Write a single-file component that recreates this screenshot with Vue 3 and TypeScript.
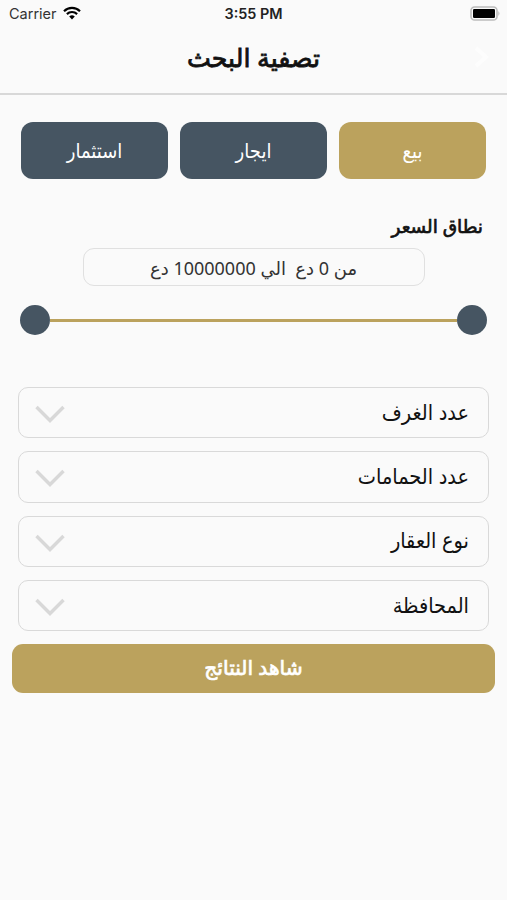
<script setup lang="ts">
const tabs: { label: string; active: boolean }[] = [
  { label: 'بيع', active: true },
  { label: 'ايجار', active: false },
  { label: 'استثمار', active: false },
]
const fields: string[] = ['عدد الغرف', 'عدد الحمامات', 'نوع العقار', 'المحافظة']
</script>

<template>
  <div class="screen" dir="rtl">
    <div class="status" dir="ltr">
      <div class="carrier">
        <span>Carrier</span>
        <svg width="18" height="14" viewBox="0 0 18 14">
          <path d="M1 5.2a11.5 11.5 0 0 1 16 0M3.9 8.1a7.3 7.3 0 0 1 10.2 0" fill="none" stroke="#000" stroke-width="2.2" />
          <path d="M9 13.4 6.2 10.5a4 4 0 0 1 5.6 0z" />
        </svg>
      </div>
      <div class="time">3:55 PM</div>
      <div class="power">
        <svg width="31" height="15" viewBox="0 0 31 15">
          <rect x="1" y="1" width="26" height="13" rx="3.6" fill="none" stroke="#bcbcbc" stroke-width="1.6" />
          <rect x="3" y="3" width="22" height="9" rx="1.2" />
          <path d="M28.3 5q2.4 2.5 0 5z" fill="#bcbcbc" />
        </svg>
      </div>
    </div>
    <header>
      <svg class="back" width="24" height="24" viewBox="0 0 24 24"><path d="m5 3 10 9-10 9" fill="none" stroke="#fdfdfd" stroke-width="4" /></svg>
      <h1>تصفية البحث</h1>
    </header>
    <main>
      <div class="tabs">
        <button v-for="t in tabs" :key="t.label" :class="{ active: t.active }">{{ t.label }}</button>
      </div>
      <h2>نطاق السعر</h2>
      <div class="range">من 0 دع&nbsp; الي 10000000 دع</div>
      <div class="slider"><i class="knob"></i><i class="track"></i><i class="knob"></i></div>
      <div class="fields">
        <div v-for="f in fields" :key="f" class="field">
          <span>{{ f }}</span>
          <svg width="30" height="20" viewBox="0 0 30 20"><path d="M1.5 3 15 16.5 28.5 3" fill="none" stroke="#d8d8d8" stroke-width="3.4" /></svg>
        </div>
      </div>
      <button class="submit">شاهد النتائج</button>
    </main>
  </div>
</template>

<style>
body { background: #fafafa; }
</style>
<style scoped>
* { box-sizing: border-box; }
.screen { height: 900px; background: #fafafa; color: #111; font-family: "Noto Sans", "DejaVu Sans Condensed", "DejaVu Sans", sans-serif; }
.status { height: 27px; display: grid; grid-template-columns: 1fr auto 1fr; align-items: center; padding: 0 6px 0 9px; font: 14.5px Inter, sans-serif; }
.carrier { display: flex; align-items: center; gap: 6px; color: #333; }
.carrier svg { margin-top: -2px; }
.time { font-weight: 600; font-size: 14.4px; color: #222; padding-right: 3px; }
.power { display: flex; justify-content: flex-end; margin-top: -1px; }
header { height: 68px; border-bottom: 2px solid #d8d8d8; display: grid; grid-template-columns: 24px 1fr 24px; padding: 0 12px 6px; align-items: center; }
h1, h2, .range, .submit { font-family: "Noto Sans", "DejaVu Sans", sans-serif; }
h1 { margin: 0; text-align: center; font-size: 25.3px; font-weight: 400; -webkit-text-stroke: .8px #111; }
main { display: flex; flex-direction: column; padding: 27px 12px 0; }
.tabs { display: grid; grid-template-columns: repeat(3, 147px); gap: 12px; padding: 0 9px; }
button { border: 0; color: #fff; font-family: inherit; font-size: 20px; padding: 0; }
.tabs button { height: 57px; border-radius: 12px; background: #465562; }
.tabs button.active { background: #bba25d; }
h2 { margin: 32px 12px 0; height: 37px; line-height: 30px; font-size: 18.5px; font-weight: 400; -webkit-text-stroke: .7px #111; }
.range { width: 342px; height: 38px; margin: 0 auto; border: 1px solid #e0e0e0; border-radius: 11px; text-align: center; line-height: 38px; font-size: 18px; color: #333; }
.slider { display: flex; align-items: center; margin: 19px 8px 0; height: 30px; }
.knob { width: 30px; height: 30px; border-radius: 50%; background: #465562; }
.track { flex: 1; height: 3px; background: #bba25d; }
.fields { margin: 52px 6px 0; display: grid; gap: 13px; }
.field { height: 51.3px; border: 1px solid #d9d9d9; border-radius: 10px; display: flex; justify-content: space-between; align-items: center; padding: 0 19px 0 16px; font-size: 21.5px; }
.field span { margin-top: -3px; }
.field svg { margin-top: 3px; }
.submit { margin-top: 13px; height: 49px; border-radius: 11px; background: #bba25d; font-family: "Noto Sans", "DejaVu Sans", sans-serif; font-size: 20.2px; -webkit-text-stroke: .7px #fff; padding-bottom: 3px; }
</style>
